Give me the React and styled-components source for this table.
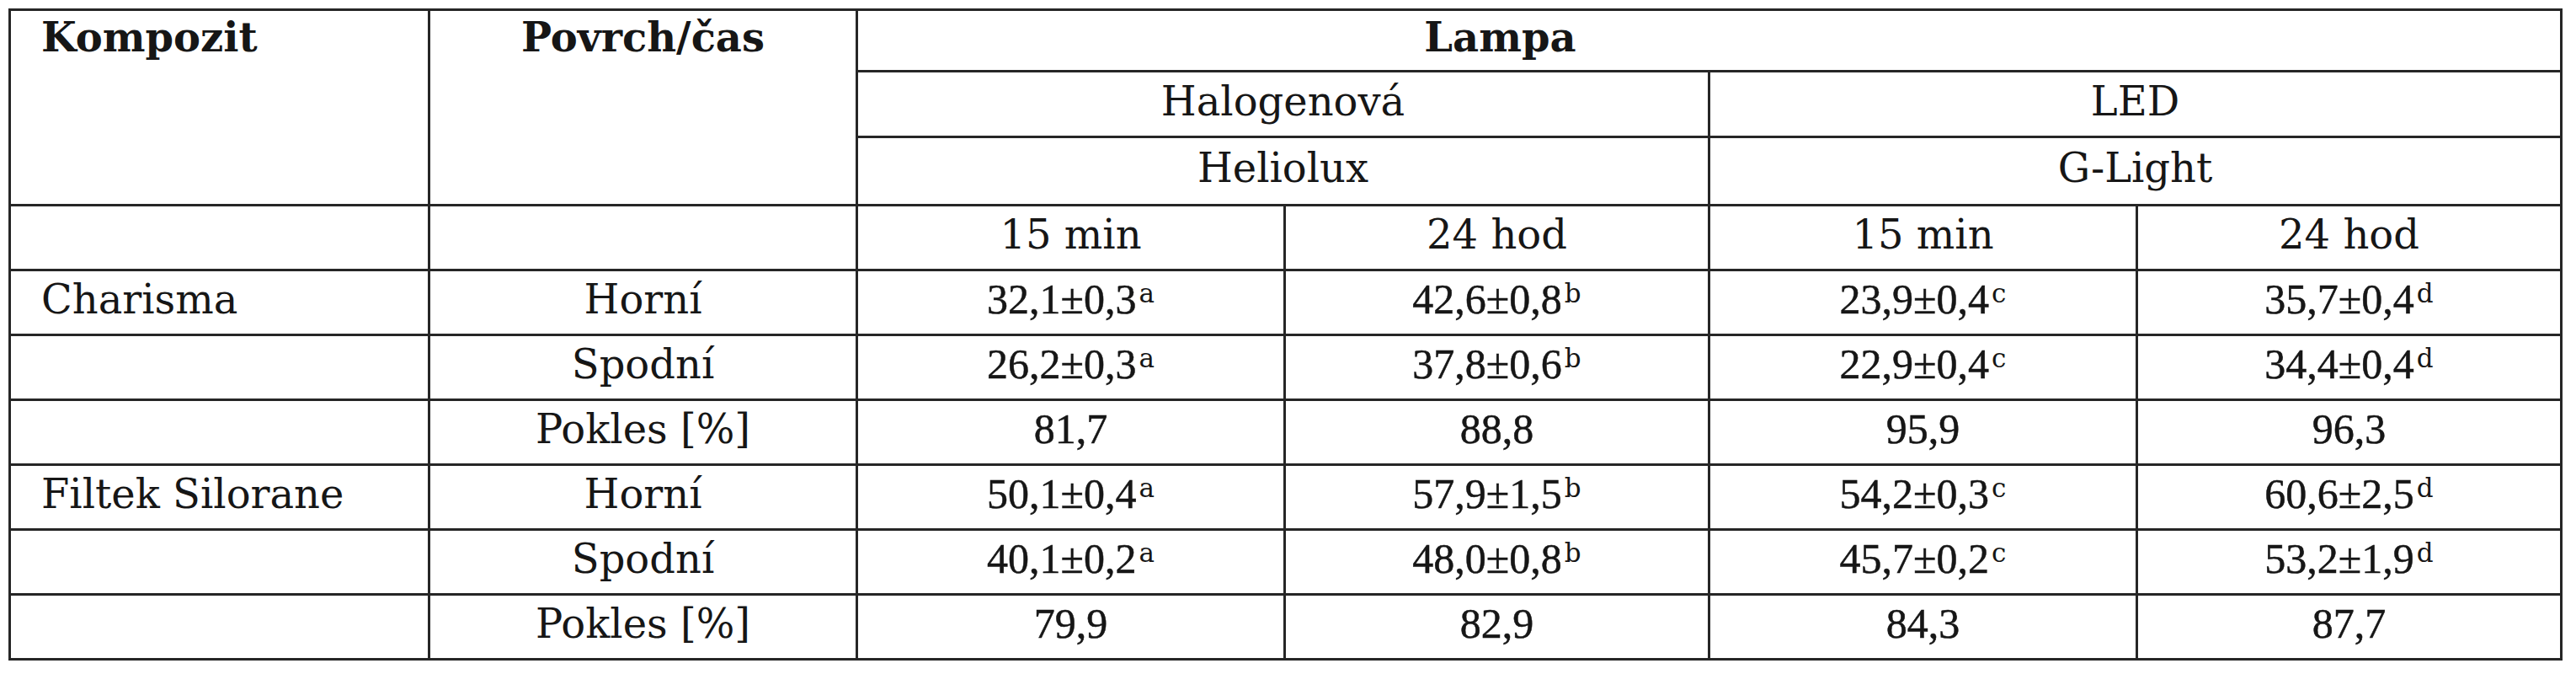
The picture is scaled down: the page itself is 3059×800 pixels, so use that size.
import styled, { createGlobalStyle } from 'styled-components';

const GlobalStyle = createGlobalStyle`
  html, body {
    margin: 0;
    background: #fff;
  }
  body {
    font-family: "DejaVu Serif", "Liberation Serif", serif;
    color: #161616;
  }
`;

const Page = styled.div`
  padding: 10px 0 0 10px;
`;

const Table = styled.table`
  border-collapse: collapse;
  table-layout: fixed;
  width: 3033px;
  font-family: "DejaVu Serif", "Liberation Serif", serif;
  font-size: 48px;
  line-height: 1.1;
  color: #161616;
`;

const Col = styled.col`
  width: ${(p) => p.$w}px;
`;

const Row = styled.tr`
  height: ${(p) => p.$h}px;
`;

const Cell = styled.td`
  position: relative;
  border: 3px solid #262626;
  padding: ${(p) => (p.$top ? '5px 0 0' : '0 0 7px')};
  padding-left: ${(p) => (p.$left ? '36px' : '0')};
  padding-right: ${(p) => p.$padRight || 0}px;
  text-align: ${(p) => (p.$left ? 'left' : 'center')};
  vertical-align: ${(p) => (p.$top ? 'top' : 'middle')};
  font-family: ${(p) => (p.$num ? '"Liberation Serif", "Times New Roman", serif' : 'inherit')};
  font-size: ${(p) => (p.$num ? '50px' : 'inherit')};
  font-weight: ${(p) => (p.$bold ? 700 : 400)};
  -webkit-text-stroke: ${(p) => (p.$num ? '0.5px #161616' : '0')};
  white-space: nowrap;

  /* short tick of each inner rule below the last border */
  &::after {
    content: ${(p) => (p.$stub ? '""' : 'none')};
    position: absolute;
    right: -3px;
    bottom: -6px;
    width: 3px;
    height: 5px;
    background: #262626;
  }
`;

const Sup = styled.span`
  font-family: "DejaVu Serif", serif;
  font-size: 31px;
  line-height: 0;
  vertical-align: 13px;
  margin-left: 3px;
  -webkit-text-stroke: 0;
`;

const widths = [498, 508, 508, 504, 508, 504];

const rows = [
  { name: 'Charisma', side: 'Horní', vals: [['32,1±0,3', 'a'], ['42,6±0,8', 'b'], ['23,9±0,4', 'c'], ['35,7±0,4', 'd']] },
  { name: '', side: 'Spodní', vals: [['26,2±0,3', 'a'], ['37,8±0,6', 'b'], ['22,9±0,4', 'c'], ['34,4±0,4', 'd']] },
  { name: '', side: 'Pokles [%]', vals: [['81,7'], ['88,8'], ['95,9'], ['96,3']] },
  { name: 'Filtek Silorane', side: 'Horní', vals: [['50,1±0,4', 'a'], ['57,9±1,5', 'b'], ['54,2±0,3', 'c'], ['60,6±2,5', 'd']] },
  { name: '', side: 'Spodní', vals: [['40,1±0,2', 'a'], ['48,0±0,8', 'b'], ['45,7±0,2', 'c'], ['53,2±1,9', 'd']] },
  { name: '', side: 'Pokles [%]', vals: [['79,9'], ['82,9'], ['84,3'], ['87,7']] },
];

const App = () => {
  return (
    <>
      <GlobalStyle />
      <Page>
        <Table>
          <colgroup>
            {widths.map((w, i) => (
              <Col key={i} $w={w} />
            ))}
          </colgroup>
          <thead>
            <Row $h={73}>
              <Cell as='th' rowSpan={3} $left $top $bold>
                Kompozit
              </Cell>
              <Cell as='th' rowSpan={3} $top $bold>
                Povrch/čas
              </Cell>
              <Cell as='th' colSpan={4} $bold $padRight={496}>
                Lampa
              </Cell>
            </Row>
            <Row $h={78}>
              <Cell as='th' colSpan={2}>Halogenová</Cell>
              <Cell as='th' colSpan={2}>LED</Cell>
            </Row>
            <Row $h={81}>
              <Cell as='th' colSpan={2}>Heliolux</Cell>
              <Cell as='th' colSpan={2}>G-Light</Cell>
            </Row>
            <Row $h={77}>
              <Cell as='th' />
              <Cell as='th' />
              <Cell as='th'>15 min</Cell>
              <Cell as='th'>24 hod</Cell>
              <Cell as='th'>15 min</Cell>
              <Cell as='th'>24 hod</Cell>
            </Row>
          </thead>
          <tbody>
            {rows.map((r, i) => {
              const last = i === rows.length - 1;
              return (
                <Row key={i} $h={77}>
                  <Cell $left $stub={last}>
                    {r.name}
                  </Cell>
                  <Cell $stub={last}>{r.side}</Cell>
                  {r.vals.map(([v, s], j) => (
                    <Cell key={j} $num $stub={last && j < 3}>
                      {v}
                      {s && <Sup>{s}</Sup>}
                    </Cell>
                  ))}
                </Row>
              );
            })}
          </tbody>
        </Table>
      </Page>
    </>
  );
};

export default App;
